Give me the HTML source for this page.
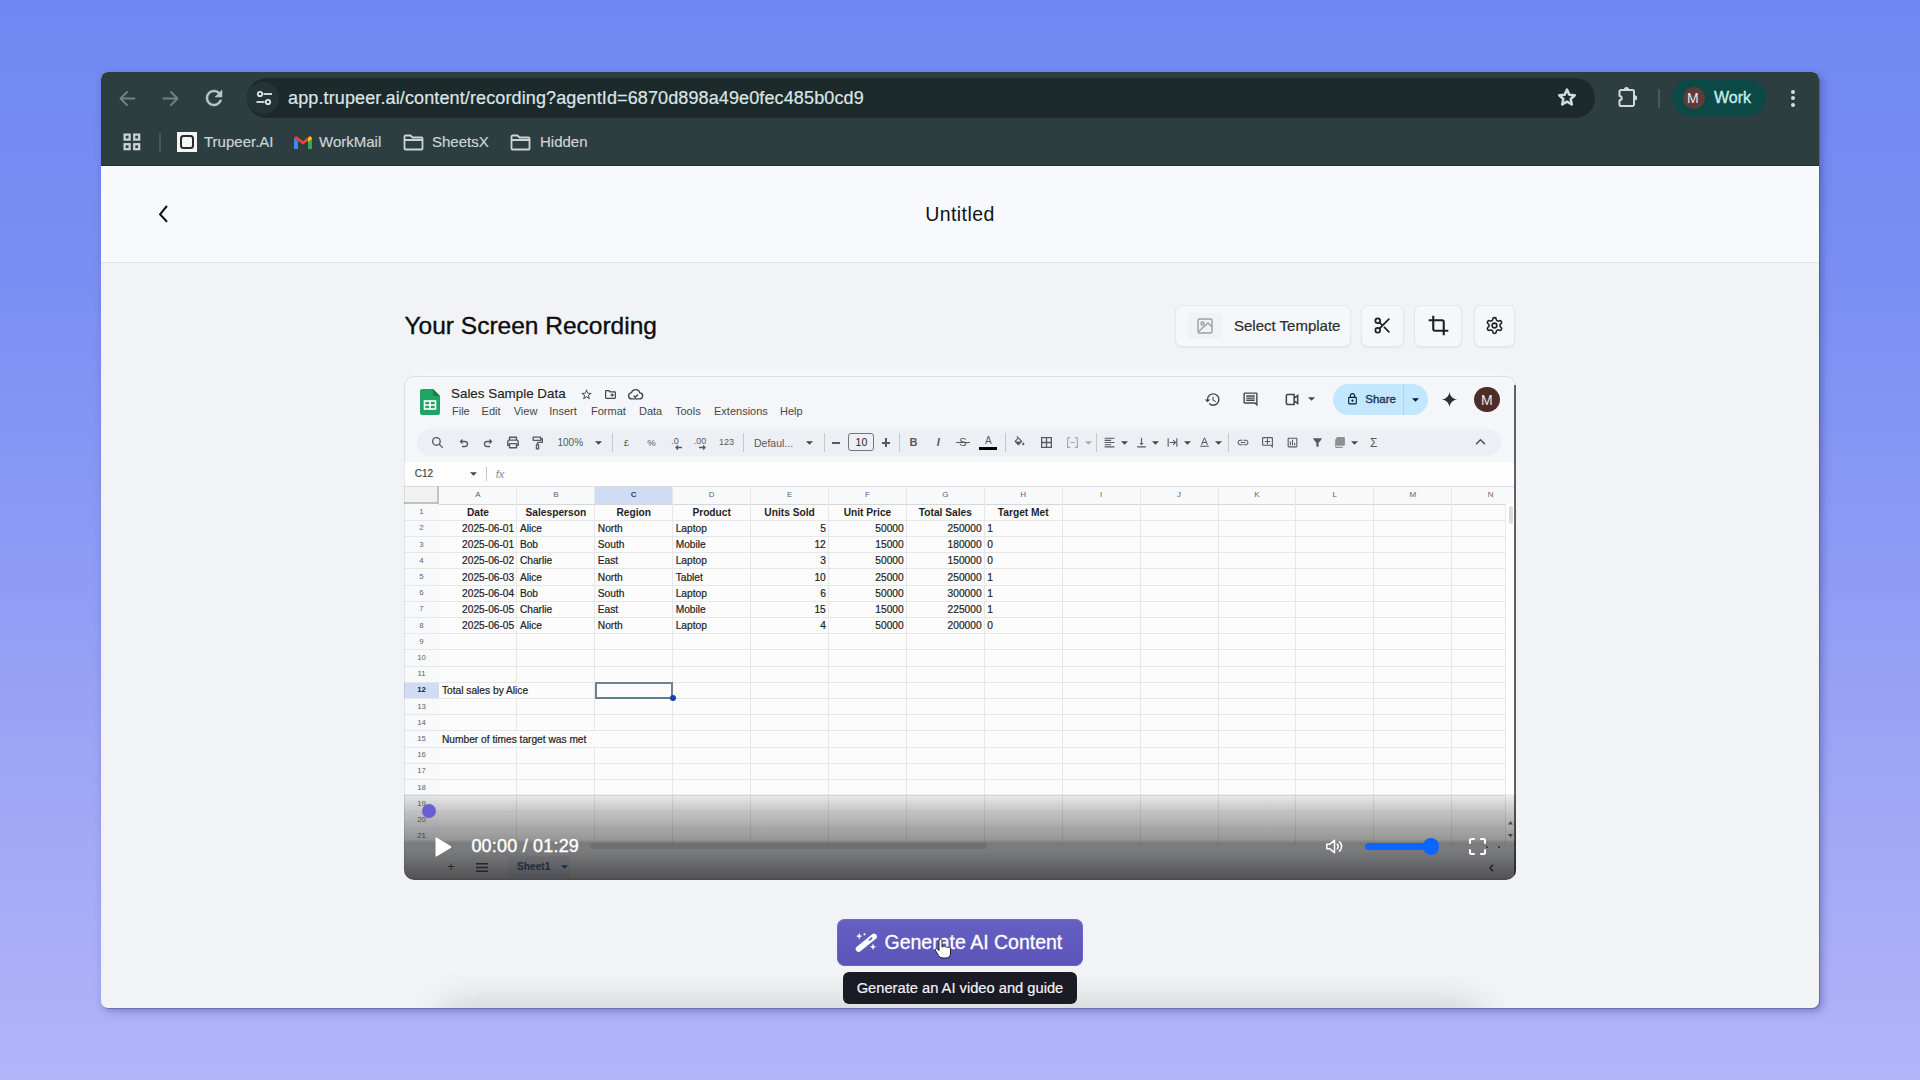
<!DOCTYPE html>
<html><head><meta charset="utf-8">
<style>
*{box-sizing:border-box;margin:0;padding:0}
html,body{width:1920px;height:1080px;overflow:hidden}
body{position:relative;font-family:"Liberation Sans",sans-serif;background:linear-gradient(180deg,#7088f3 0%,#7a8ef3 25%,#8b9af4 50%,#a0a8f6 75%,#b2b4f8 100%)}
.a{position:absolute}
.t{position:absolute;white-space:nowrap;line-height:1}
svg{position:absolute;overflow:visible}
#win{position:absolute;left:101px;top:72px;width:1718px;height:936px;border-radius:7px;overflow:hidden;box-shadow:3px 3px 9px rgba(40,40,120,0.38),1px 1px 0 rgba(60,60,110,0.35);background:#f2f3f6}
#vid{position:absolute;left:404px;top:376px;width:1112px;height:504px;border-radius:10px;overflow:hidden;background:#f5f6f9}
#vid .a,#vid .t,#vid svg{position:absolute}
</style></head>
<body>
<div id="win"><div style="position:absolute;left:345px;top:942px;width:1030px;height:40px;border-radius:20px;box-shadow:0 0 36px 10px rgba(0,0,0,0.16)"></div></div>
<!-- chrome -->
<div class="a" style="left:101px;top:72px;width:1718px;height:94px;background:#2d3e40;border-radius:7px 7px 0 0"></div>
<div class="a" style="left:247px;top:78px;width:1348px;height:40px;border-radius:20px;background:#1c2a2c"></div>
<div class="a" style="left:247px;top:82px;width:32px;height:32px;border-radius:16px;background:#243336"></div>
<!-- back / fwd / reload -->
<svg style="left:118px;top:89px" width="19" height="19" viewBox="0 0 19 19"><path fill="none" stroke="#6f8284" stroke-width="1.9" stroke-linecap="round" stroke-linejoin="round" d="M16.5 9.5H3M9 3L2.5 9.5 9 16"/></svg>
<svg style="left:161px;top:89px" width="19" height="19" viewBox="0 0 19 19"><path fill="none" stroke="#6f8284" stroke-width="1.9" stroke-linecap="round" stroke-linejoin="round" d="M2.5 9.5H16M10 3l6.5 6.5L10 16"/></svg>
<svg style="left:201.6px;top:86px" width="24" height="24" viewBox="0 0 24 24"><path fill="#bac6c7" stroke="#bac6c7" stroke-width="0.5" d="M17.65 6.35C16.2 4.9 14.21 4 12 4c-4.42 0-7.99 3.58-7.99 8s3.57 8 7.99 8c3.73 0 6.84-2.55 7.73-6h-2.08c-.82 2.33-3.04 4-5.65 4-3.31 0-6-2.69-6-6s2.69-6 6-6c1.66 0 3.14.69 4.22 1.78L13 11h7V4l-2.35 2.35z"/></svg>
<!-- tune -->
<svg style="left:255px;top:90px" width="18" height="16" viewBox="0 0 18 16"><g fill="none" stroke="#dfe6e6" stroke-width="1.8"><circle cx="5" cy="4" r="2.2"/><line x1="8.5" y1="4" x2="17" y2="4"/><circle cx="13" cy="12" r="2.2"/><line x1="1.5" y1="12" x2="9.5" y2="12"/></g></svg>
<div class="t" style="left:288px;top:89px;font-size:18px;color:#dde5e6;letter-spacing:0.12px;-webkit-text-stroke:0.2px #dde5e6">app.trupeer.ai/content/recording?agentId=6870d898a49e0fec485b0cd9</div>
<!-- star -->
<svg style="left:1557px;top:87px" width="20" height="20" viewBox="0 0 20 20"><polygon fill="none" stroke="#d0dada" stroke-width="2.5" stroke-linejoin="round" points="10.00,2.60 12.29,7.64 17.80,8.27 13.71,12.01 14.82,17.43 10.00,14.70 5.18,17.43 6.29,12.01 2.20,8.27 7.71,7.64"/></svg>
<!-- puzzle -->
<svg style="left:1615px;top:85px" width="26" height="24" viewBox="1615 85 26 24"><path fill="none" stroke="#d0dada" stroke-width="2" stroke-linejoin="round" d="M1621 90h11.5a1.5 1.5 0 0 1 1.5 1.5v13a1.5 1.5 0 0 1-1.5 1.5H1621a1.5 1.5 0 0 1-1.5-1.5v-4.2a2.2 2.2 0 0 0 0-4.4v-4.4a1.5 1.5 0 0 1 1.5-1.5z"/><path fill="#d0dada" d="M1623.9 89.6a2.6 2.6 0 0 1 5.2 0z M1634.6 95.2a2.6 2.6 0 0 1 0 5.2z"/></svg>
<div class="a" style="left:1658px;top:89px;width:1.5px;height:19px;background:#4a5a5c"></div>
<div class="a" style="left:1672px;top:79px;width:94px;height:37px;border-radius:18.5px;background:#0c4946"></div>
<div class="a" style="left:1683px;top:87px;width:22px;height:22px;border-radius:11px;background:#5d3b38"></div>
<div class="t" style="left:1687px;top:91px;font-size:14px;color:#f0e6e4">M</div>
<div class="t" style="left:1714px;top:90px;font-size:16px;color:#c4f1ee;-webkit-text-stroke:0.3px #c4f1ee">Work</div>
<div class="a" style="left:1790.5px;top:89.5px;width:4px;height:4px;border-radius:2px;background:#d5dede"></div>
<div class="a" style="left:1790.5px;top:96px;width:4px;height:4px;border-radius:2px;background:#d5dede"></div>
<div class="a" style="left:1790.5px;top:102.5px;width:4px;height:4px;border-radius:2px;background:#d5dede"></div>
<!-- bookmarks -->
<svg style="left:123px;top:133px" width="18" height="18" viewBox="0 0 18 18"><g fill="none" stroke="#ccd5d6" stroke-width="2.2"><rect x="1.6" y="1.6" width="5" height="5"/><rect x="11.2" y="1.6" width="5" height="5"/><rect x="1.6" y="11.2" width="5" height="5"/><rect x="11.2" y="11.2" width="5" height="5"/></g></svg>
<div class="a" style="left:159px;top:133px;width:1.5px;height:19px;background:#46575a"></div>
<div class="a" style="left:177px;top:132px;width:20px;height:20px;background:#f4f4f4"></div>
<div class="a" style="left:180px;top:135px;width:14px;height:14px;border-radius:3.5px;border:2px solid #2a2a2e"></div>
<div class="t" style="left:204px;top:134px;font-size:15px;color:#ccd4d5;-webkit-text-stroke:0.2px #ccd4d5">Trupeer.AI</div>
<svg style="left:294px;top:136px" width="18" height="13" viewBox="0 0 18 13"><path fill="#4285f4" d="M0 2v11h4V5z"/><path fill="#34a853" d="M14 5v8h4V2z"/><path fill="#ea4335" d="M0 2l9 6.5L18 2 16 0 9 5 2 0z"/><path fill="#fbbc04" d="M16 0l2 2v1l-4 3V2z"/></svg>
<div class="t" style="left:319px;top:134px;font-size:15px;color:#ccd4d5;-webkit-text-stroke:0.2px #ccd4d5">WorkMail</div>
<svg style="left:403px;top:134px" width="21" height="17" viewBox="0 0 21 17"><path fill="none" stroke="#ccd5d6" stroke-width="1.8" stroke-linejoin="round" d="M1.5 2.5a1 1 0 0 1 1-1h5l2 2h9a1 1 0 0 1 1 1v10a1 1 0 0 1-1 1h-16a1 1 0 0 1-1-1z M1.5 6h18"/></svg>
<div class="t" style="left:432px;top:134px;font-size:15px;color:#ccd4d5;-webkit-text-stroke:0.2px #ccd4d5">SheetsX</div>
<svg style="left:510px;top:134px" width="21" height="17" viewBox="0 0 21 17"><path fill="none" stroke="#ccd5d6" stroke-width="1.8" stroke-linejoin="round" d="M1.5 2.5a1 1 0 0 1 1-1h5l2 2h9a1 1 0 0 1 1 1v10a1 1 0 0 1-1 1h-16a1 1 0 0 1-1-1z M1.5 6h18"/></svg>
<div class="t" style="left:540px;top:134px;font-size:15px;color:#ccd4d5;-webkit-text-stroke:0.2px #ccd4d5">Hidden</div>

<div class="a" style="left:101px;top:166px;width:1718px;height:97px;background:#f8f9fc;border-bottom:1px solid #e2e4e9"></div>
<div class="a" style="left:101px;top:165px;width:1718px;height:1px;background:#1f2b2c;"></div>
<svg style="left:150px;top:200px" width="20" height="28" viewBox="0 0 20 28"><path fill="none" stroke="#0f1115" stroke-width="2" stroke-linecap="round" stroke-linejoin="round" d="M16.5 6.5L10 14.3l6.5 7"/></svg>
<div class="t" style="top:205.28px;font-size:19.5px;color:#111318;left:810px;width:300px;text-align:center;letter-spacing:0.4px">Untitled</div>
<div class="t" style="top:313.54px;font-size:24.5px;color:#0d0d0f;left:404.5px;-webkit-text-stroke:0.35px #0d0d0f">Your Screen Recording</div>
<div class="a" style="left:1175px;top:305px;width:176px;height:42px;background:#f6f7f9;border:1px solid #e4e6ea;border-radius:7px;box-shadow:0 1px 2px rgba(0,0,0,0.06)"></div>
<div class="a" style="left:1361px;top:305px;width:43px;height:42px;background:#f6f7f9;border:1px solid #e4e6ea;border-radius:7px;box-shadow:0 1px 2px rgba(0,0,0,0.06)"></div>
<div class="a" style="left:1414px;top:305px;width:48px;height:42px;background:#f6f7f9;border:1px solid #e4e6ea;border-radius:7px;box-shadow:0 1px 2px rgba(0,0,0,0.06)"></div>
<div class="a" style="left:1474px;top:305px;width:41px;height:42px;background:#f6f7f9;border:1px solid #e4e6ea;border-radius:7px;box-shadow:0 1px 2px rgba(0,0,0,0.06)"></div>
<div class="a" style="left:1188px;top:313px;width:34px;height:26px;background:#f1f2f4;border-radius:4px"></div>
<svg style="left:1196px;top:317px" width="18" height="18" viewBox="0 0 18 18"><g fill="none" stroke="#9aa0a6" stroke-width="1.4"><rect x="2" y="2" width="14" height="14" rx="1.5"/><circle cx="6.5" cy="6.5" r="1.5"/><path d="M2.5 14.5L12 6l4 4"/></g></svg>
<div class="t" style="top:318.18px;font-size:15px;color:#2b2d31;left:1234px;-webkit-text-stroke:0.2px #2b2d31">Select Template</div>
<svg style="left:1373px;top:316px" width="19" height="19" viewBox="0 0 24 24"><g fill="none" stroke="#1f2023" stroke-width="2.2" stroke-linecap="round"><circle cx="6" cy="6" r="3"/><circle cx="6" cy="18" r="3"/><path d="M20 4L8.12 15.88M14.47 14.48L20 20M8.12 8.12L12 12"/></g></svg>
<svg style="left:1428px;top:315px" width="21" height="21" viewBox="0 0 24 24"><g fill="none" stroke="#1f2023" stroke-width="2.4" stroke-linecap="square"><path d="M6 2v14a2 2 0 0 0 2 2h14"/><path d="M18 22V8a2 2 0 0 0-2-2H2"/></g></svg>
<svg style="left:1485px;top:316px" width="19" height="19" viewBox="0 0 24 24"><g fill="none" stroke="#1f2023" stroke-width="2"><path d="M12.22 2h-.44a2 2 0 0 0-2 2v.18a2 2 0 0 1-1 1.73l-.43.25a2 2 0 0 1-2 0l-.15-.08a2 2 0 0 0-2.73.73l-.22.38a2 2 0 0 0 .73 2.73l.15.1a2 2 0 0 1 1 1.72v.51a2 2 0 0 1-1 1.74l-.15.09a2 2 0 0 0-.73 2.73l.22.38a2 2 0 0 0 2.73.73l.15-.08a2 2 0 0 1 2 0l.43.25a2 2 0 0 1 1 1.73V20a2 2 0 0 0 2 2h.44a2 2 0 0 0 2-2v-.18a2 2 0 0 1 1-1.73l.43-.25a2 2 0 0 1 2 0l.15.08a2 2 0 0 0 2.73-.73l.22-.39a2 2 0 0 0-.73-2.73l-.15-.08a2 2 0 0 1-1-1.74v-.5a2 2 0 0 1 1-1.74l.15-.09a2 2 0 0 0 .73-2.73l-.22-.38a2 2 0 0 0-2.73-.73l-.15.08a2 2 0 0 1-2 0l-.43-.25a2 2 0 0 1-1-1.73V4a2 2 0 0 0-2-2z"/><circle cx="12" cy="12" r="3"/></g></svg>
<div class="a" style="left:404px;top:364px;width:1112px;height:12px;background:linear-gradient(180deg,rgba(255,255,255,0),rgba(255,255,255,0.55));-webkit-mask-image:linear-gradient(90deg,transparent,#000 4%,#000 96%,transparent)"></div>
<div id="vid">
<div class="a" style="left:0px;top:110px;width:1112px;height:400px;background:#fcfcfc;"></div>
<svg style="left:16px;top:13px" width="20" height="26" viewBox="0 0 20 26"><path fill="#1fa463" d="M0 2a2 2 0 0 1 2-2h11l7 7v17a2 2 0 0 1-2 2H2a2 2 0 0 1-2-2z"/><path fill="#188038" d="M13 0l7 7h-5a2 2 0 0 1-2-2z"/><g fill="none" stroke="#fff" stroke-width="1.6"><rect x="4.5" y="12" width="11" height="8"/><path d="M4.5 16h11M10 12v8"/></g></svg>
<div class="t" style="top:11.46px;font-size:13.4px;color:#1f1f1f;left:47px;-webkit-text-stroke:0.15px #1f1f1f">Sales Sample Data</div>
<svg style="left:176px;top:12px" width="13" height="13" viewBox="0 0 24 24"><path fill="#444746" d="M22 9.24l-7.19-.62L12 2 9.19 8.63 2 9.24l5.46 4.73L5.82 21 12 17.27 18.18 21l-1.63-7.03L22 9.24zM12 15.4l-3.76 2.27 1-4.28-3.32-2.88 4.38-.38L12 6.1l1.71 4.04 4.38.38-3.32 2.88 1 4.28L12 15.4z"/></svg>
<svg style="left:200px;top:12px" width="13" height="13" viewBox="0 0 24 24"><path fill="none" stroke="#444746" stroke-width="2.2" d="M3 6a1 1 0 0 1 1-1h5l2 2h9a1 1 0 0 1 1 1v10a1 1 0 0 1-1 1H4a1 1 0 0 1-1-1z M12 13h5M14.5 10.5l2.5 2.5-2.5 2.5"/></svg>
<svg style="left:224px;top:12px" width="15" height="13" viewBox="0 0 24 20"><path fill="none" stroke="#444746" stroke-width="2.2" d="M6 17a5 5 0 0 1-.5-9.97A7 7 0 0 1 19 7.5 4.75 4.75 0 0 1 18.5 17z M9 12l2.5 2.5L16 10"/></svg>
<div class="t" style="top:30.33px;font-size:11px;color:#444746;left:48px;">File</div>
<div class="t" style="top:30.33px;font-size:11px;color:#444746;left:77.6px;">Edit</div>
<div class="t" style="top:30.33px;font-size:11px;color:#444746;left:109.7px;">View</div>
<div class="t" style="top:30.33px;font-size:11px;color:#444746;left:145.3px;">Insert</div>
<div class="t" style="top:30.33px;font-size:11px;color:#444746;left:187px;">Format</div>
<div class="t" style="top:30.33px;font-size:11px;color:#444746;left:235px;">Data</div>
<div class="t" style="top:30.33px;font-size:11px;color:#444746;left:271px;">Tools</div>
<div class="t" style="top:30.33px;font-size:11px;color:#444746;left:310px;">Extensions</div>
<div class="t" style="top:30.33px;font-size:11px;color:#444746;left:376px;">Help</div>
<svg style="left:800px;top:15px" width="17" height="17" viewBox="0 0 24 24"><path fill="#444746" d="M13 3a9 9 0 0 0-9 9H1l3.89 3.89.07.14L9 12H6c0-3.87 3.13-7 7-7s7 3.13 7 7-3.13 7-7 7c-1.93 0-3.68-.79-4.94-2.06l-1.42 1.42A8.954 8.954 0 0 0 13 21a9 9 0 0 0 0-18zm-1 5v5l4.28 2.54.72-1.21-3.5-2.08V8H12z"/></svg>
<svg style="left:838px;top:15px" width="17" height="17" viewBox="0 0 24 24"><path fill="#444746" d="M21.99 4c0-1.1-.89-2-1.99-2H4c-1.1 0-2 .9-2 2v12c0 1.1.9 2 2 2h14l4 4-.01-18zM20 4v13.17L18.83 16H4V4h16zM6 12h12v2H6zm0-3h12v2H6zm0-3h12v2H6z"/></svg>
<svg style="left:879px;top:15px" width="18" height="17" viewBox="0 0 24 24"><path fill="none" stroke="#444746" stroke-width="2.2" d="M4 7a2 2 0 0 1 2-2h9v14H6a2 2 0 0 1-2-2z M15 10l5-3.5v11L15 14"/></svg>
<svg style="left:904px;top:21px" width="7" height="4" viewBox="0 0 10 5"><path fill="#444746" d="M0 0h10L5 5z"/></svg>
<div class="a" style="left:928.7px;top:8px;width:95.3px;height:31px;background:#c2e7ff;border-radius:15.5px"></div>
<div class="a" style="left:999px;top:8px;width:1px;height:31px;background:#a9d4ef;"></div>
<svg style="left:942px;top:15px" width="13" height="16" viewBox="0 0 24 24"><path fill="#001d35" d="M18 8h-1V6c0-2.76-2.24-5-5-5S7 3.24 7 6v2H6c-1.1 0-2 .9-2 2v10c0 1.1.9 2 2 2h12c1.1 0 2-.9 2-2V10c0-1.1-.9-2-2-2zM9 6c0-1.66 1.34-3 3-3s3 1.34 3 3v2H9V6zm9 14H6V10h12v10zm-6-3c1.1 0 2-.9 2-2s-.9-2-2-2-2 .9-2 2 .9 2 2 2z"/></svg>
<div class="t" style="top:17.89px;font-size:11.5px;color:#1b3550;left:961.3px;-webkit-text-stroke:0.35px #1b3550">Share</div>
<svg style="left:1007.5px;top:21.5px" width="7" height="4" viewBox="0 0 10 5"><path fill="#001d35" d="M0 0h10L5 5z"/></svg>
<svg style="left:1037px;top:15px" width="17" height="17" viewBox="0 0 24 24"><path fill="#2d3133" d="M12 1c.6 6 4.8 10.2 11 11-6.2.8-10.4 5-11 11-.6-6-4.8-10.2-11-11 6.2-.8 10.4-5 11-11z"/></svg>
<div class="a" style="left:1070px;top:10.7px;width:25.8px;height:25.8px;background:#4e2c2a;border-radius:50%"></div>
<div class="t" style="top:16.97px;font-size:14px;color:#f2e6e4;left:932.9px;width:300px;text-align:center;">M</div>
<div class="a" style="left:13px;top:53px;width:1083.5px;height:27px;background:#eceff4;border-radius:13.5px"></div>
<svg style="left:26.5px;top:60px" width="13" height="13" viewBox="0 0 24 24"><path fill="none" stroke="#555a5e" stroke-width="2.6" stroke-linecap="round" d="M10 3a7 7 0 1 1 0 14 7 7 0 0 1 0-14zM15 15l6 6"/></svg>
<svg style="left:53.5px;top:61px" width="12" height="12" viewBox="0 0 24 24"><path fill="none" stroke="#555a5e" stroke-width="2.6" d="M9 5L5 9l4 4M5 9h9a5 5 0 0 1 0 10H8"/></svg>
<svg style="left:78px;top:61px" width="12" height="12" viewBox="0 0 24 24"><path fill="none" stroke="#555a5e" stroke-width="2.6" d="M15 5l4 4-4 4M19 9h-9a5 5 0 0 0 0 10h6"/></svg>
<svg style="left:102px;top:60px" width="14" height="13" viewBox="0 0 24 22"><path fill="none" stroke="#555a5e" stroke-width="2.4" stroke-linejoin="round" d="M6 7V2h12v5M6 16H3V10a3 3 0 0 1 3-3h12a3 3 0 0 1 3 3v6h-3M6 13h12v7H6z"/></svg>
<svg style="left:126.5px;top:59.5px" width="13" height="14" viewBox="0 0 24 26"><path fill="none" stroke="#555a5e" stroke-width="2.4" stroke-linejoin="round" d="M4 2h14v6H4z M18 5h3v7h-9v4 M10 16h4v8h-4z"/></svg>
<div class="t" style="top:61.92px;font-size:10px;color:#555a5e;left:153.5px;">100%</div>
<svg style="left:191.1px;top:64.5px" width="7" height="4" viewBox="0 0 10 5"><path fill="#444746" d="M0 0h10L5 5z"/></svg>
<div class="a" style="left:207.9px;top:57px;width:1px;height:19px;background:#c7c7c7;"></div>
<div class="t" style="top:61.86px;font-size:9.5px;color:#555a5e;left:72.4px;width:300px;text-align:center;">£</div>
<div class="t" style="top:61.86px;font-size:9.5px;color:#555a5e;left:97.4px;width:300px;text-align:center;">%</div>
<div class="t" style="top:61.11px;font-size:9px;color:#555a5e;left:121px;width:300px;text-align:center;">.0</div>
<svg style="left:270px;top:69px" width="8" height="5" viewBox="0 0 8 5"><path fill="none" stroke="#555a5e" stroke-width="1.3" d="M8 2.5H2M4 0.5L2 2.5l2 2"/></svg>
<div class="t" style="top:61.11px;font-size:9px;color:#555a5e;left:146px;width:300px;text-align:center;">.00</div>
<svg style="left:295px;top:69px" width="8" height="5" viewBox="0 0 8 5"><path fill="none" stroke="#555a5e" stroke-width="1.3" d="M0 2.5h6M4 0.5l2 2-2 2"/></svg>
<div class="t" style="top:62.11px;font-size:9px;color:#555a5e;left:172.4px;width:300px;text-align:center;">123</div>
<div class="a" style="left:338.6px;top:57px;width:1px;height:19px;background:#c7c7c7;"></div>
<div class="t" style="top:61.68px;font-size:10.5px;color:#555a5e;left:350px;">Defaul...</div>
<svg style="left:401.5px;top:64.5px" width="7" height="4" viewBox="0 0 10 5"><path fill="#444746" d="M0 0h10L5 5z"/></svg>
<div class="a" style="left:420.4px;top:57px;width:1px;height:19px;background:#c7c7c7;"></div>
<div class="a" style="left:428px;top:66px;width:8px;height:1.5px;background:#555a5e;"></div>
<div class="a" style="left:444.4px;top:57px;width:26px;height:18px;background:transparent;border:1px solid #747775;border-radius:3px"></div>
<div class="t" style="top:61.38px;font-size:10.5px;color:#1f1f1f;left:307.4px;width:300px;text-align:center;">10</div>
<div class="a" style="left:477.5px;top:66px;width:8px;height:1.5px;background:#555a5e;"></div>
<div class="a" style="left:481px;top:62px;width:1.5px;height:8.5px;background:#555a5e;"></div>
<div class="a" style="left:495px;top:57px;width:1px;height:19px;background:#c7c7c7;"></div>
<div class="t" style="top:61.43px;font-size:11px;color:#555a5e;font-weight:bold;left:359.4px;width:300px;text-align:center;">B</div>
<div class="t" style="top:61.43px;font-size:11px;color:#555a5e;font-weight:bold;left:384.4px;width:300px;text-align:center;font-style:italic;font-family:"Liberation Serif",serif">I</div>
<div class="t" style="top:61.43px;font-size:11px;color:#555a5e;left:409px;width:300px;text-align:center;">S</div>
<div class="a" style="left:552px;top:66px;width:14px;height:1.2px;background:#555a5e;"></div>
<div class="t" style="top:60.12px;font-size:10px;color:#555a5e;left:434.4px;width:300px;text-align:center;">A</div>
<div class="a" style="left:575px;top:71px;width:18px;height:3px;background:#000000;"></div>
<div class="a" style="left:600.8px;top:57px;width:1px;height:19px;background:#c7c7c7;"></div>
<svg style="left:609px;top:60px" width="13" height="13" viewBox="0 0 24 24"><path fill="#555a5e" d="M16.56 8.94L7.62 0 6.21 1.41l2.38 2.38-5.15 5.15a1.49 1.49 0 0 0 0 2.12l5.5 5.5c.29.29.68.44 1.06.44s.77-.15 1.06-.44l5.5-5.5c.59-.58.59-1.53 0-2.12zM5.21 10L10 5.21 14.79 10H5.21zM19 11.5s-2 2.17-2 3.5c0 1.1.9 2 2 2s2-.9 2-2c0-1.33-2-3.5-2-3.5z"/></svg>
<svg style="left:636px;top:60px" width="13" height="13" viewBox="0 0 24 24"><path fill="none" stroke="#555a5e" stroke-width="2.4" d="M3 3h18v18H3z M12 3v18M3 12h18"/></svg>
<svg style="left:662px;top:60px" width="13" height="13" viewBox="0 0 24 24"><path fill="none" stroke="#a8abad" stroke-width="2.2" d="M3 3h5M3 3v18h5M21 3h-5M21 3v18h-5M8 12h8"/></svg>
<svg style="left:680.5px;top:64.5px" width="7" height="4" viewBox="0 0 10 5"><path fill="#a8abad" d="M0 0h10L5 5z"/></svg>
<div class="a" style="left:692px;top:57px;width:1px;height:19px;background:#c7c7c7;"></div>
<svg style="left:699px;top:60px" width="13" height="13" viewBox="0 0 24 24"><path fill="#555a5e" d="M3 3h18v2H3zM3 7h12v2H3zM3 11h18v2H3zM3 15h12v2H3zM3 19h18v2H3z"/></svg>
<svg style="left:716.5px;top:64.5px" width="7" height="4" viewBox="0 0 10 5"><path fill="#444746" d="M0 0h10L5 5z"/></svg>
<svg style="left:731px;top:60px" width="13" height="13" viewBox="0 0 24 24"><path fill="#555a5e" d="M16 13h-3V3h-2v10H8l4 4 4-4zM4 19v2h16v-2H4z"/></svg>
<svg style="left:747.5px;top:64.5px" width="7" height="4" viewBox="0 0 10 5"><path fill="#444746" d="M0 0h10L5 5z"/></svg>
<svg style="left:762px;top:60px" width="13" height="13" viewBox="0 0 24 24"><path fill="#555a5e" d="M3 4h2v16H3zM19 4h2v16h-2zM7 11h8.2l-2.6-2.6L14 7l5 5-5 5-1.4-1.4 2.6-2.6H7z"/></svg>
<svg style="left:779.5px;top:64.5px" width="7" height="4" viewBox="0 0 10 5"><path fill="#444746" d="M0 0h10L5 5z"/></svg>
<svg style="left:794px;top:60px" width="13" height="13" viewBox="0 0 24 24"><path fill="#555a5e" d="M4 20h16v-2l-2-0.01V18H4zM11 3L5.5 16h2.2l1.1-3h6.4l1.1 3h2.2L13 3h-2zm-1.4 8L12 4.9 14.4 11H9.6z"/></svg>
<svg style="left:811.1px;top:64.5px" width="7" height="4" viewBox="0 0 10 5"><path fill="#444746" d="M0 0h10L5 5z"/></svg>
<div class="a" style="left:823.8px;top:57px;width:1px;height:19px;background:#c7c7c7;"></div>
<svg style="left:832px;top:60px" width="14" height="13" viewBox="0 0 24 24"><path fill="#555a5e" d="M3.9 12c0-1.71 1.39-3.1 3.1-3.1h4V7H7c-2.76 0-5 2.24-5 5s2.24 5 5 5h4v-1.9H7c-1.71 0-3.1-1.39-3.1-3.1zM8 13h8v-2H8v2zm9-6h-4v1.9h4c1.71 0 3.1 1.39 3.1 3.1s-1.39 3.1-3.1 3.1h-4V17h4c2.76 0 5-2.24 5-5s-2.24-5-5-5z"/></svg>
<svg style="left:857px;top:60px" width="13" height="13" viewBox="0 0 24 24"><path fill="#555a5e" d="M22 4c0-1.1-.9-2-2-2H4c-1.1 0-2 .9-2 2v12c0 1.1.9 2 2 2h14l4 4V4zm-2 13.17L18.83 16H4V4h16v13.17zM13 5h-2v4H7v2h4v4h2v-4h4V9h-4z"/></svg>
<svg style="left:881.5px;top:60px" width="13" height="13" viewBox="0 0 24 24"><path fill="#555a5e" d="M19 3H5c-1.1 0-2 .9-2 2v14c0 1.1.9 2 2 2h14c1.1 0 2-.9 2-2V5c0-1.1-.9-2-2-2zm0 16H5V5h14v14zM7 10h2v7H7zm4-3h2v10h-2zm4 6h2v4h-2z"/></svg>
<svg style="left:907px;top:60px" width="13" height="13" viewBox="0 0 24 24"><path fill="#555a5e" d="M4.25 5.61C6.27 8.2 10 13 10 13v6c0 .55.45 1 1 1h2c.55 0 1-.45 1-1v-6s3.72-4.8 5.74-7.39A.998.998 0 0 0 18.95 4H5.04c-.83 0-1.3.95-.79 1.61z"/></svg>
<svg style="left:929px;top:60px" width="13" height="13" viewBox="0 0 24 24"><path fill="#8d9092" d="M4 6h2v14h12v2H6a2 2 0 0 1-2-2zM8 2h12a2 2 0 0 1 2 2v12a2 2 0 0 1-2 2H8a2 2 0 0 1-2-2V4a2 2 0 0 1 2-2z"/></svg>
<svg style="left:947.2px;top:64.5px" width="7" height="4" viewBox="0 0 10 5"><path fill="#444746" d="M0 0h10L5 5z"/></svg>
<div class="t" style="top:60.94px;font-size:12px;color:#555a5e;left:819.7px;width:300px;text-align:center;">&Sigma;</div>
<svg style="left:1071px;top:62px" width="11" height="7" viewBox="0 0 12 8"><path fill="none" stroke="#555a5e" stroke-width="1.8" d="M1 7l5-5 5 5"/></svg>
<div class="a" style="left:0px;top:86px;width:1112px;height:24px;background:#fdfdfe;"></div>
<div class="t" style="top:93.12px;font-size:10px;color:#3c4043;left:10.8px;-webkit-text-stroke:0.15px #3c4043">C12</div>
<svg style="left:65.8px;top:96px" width="7" height="4" viewBox="0 0 10 5"><path fill="#444746" d="M0 0h10L5 5z"/></svg>
<div class="a" style="left:82px;top:91px;width:1px;height:14px;background:#c7c7c7;"></div>
<div class="t" style="top:93.13px;font-size:11px;color:#8a8d8f;left:-54px;width:300px;text-align:center;font-style:italic;font-family:"Liberation Serif",serif">fx</div>
<div class="a" style="left:35px;top:110px;width:1075px;height:18px;background:#f8f9fa;"></div>
<div class="a" style="left:0px;top:110px;width:35px;height:18px;background:#f0f1f1;"></div>
<div class="a" style="left:190.8px;top:110px;width:77.9px;height:18px;background:#d0dcf4;"></div>
<div class="a" style="left:0px;top:128px;width:35px;height:400px;background:#f8f9fa;"></div>
<div class="a" style="left:0px;top:306.2px;width:35px;height:16.2px;background:#d0dcf4;"></div>
<div class="a" style="left:0px;top:110px;width:1110px;height:1px;background:#dadcdf;"></div>
<div class="a" style="left:0px;top:143.7px;width:1101px;height:1px;background:#e6e7e8;"></div>
<div class="a" style="left:0px;top:159.9px;width:1101px;height:1px;background:#e6e7e8;"></div>
<div class="a" style="left:0px;top:176.1px;width:1101px;height:1px;background:#e6e7e8;"></div>
<div class="a" style="left:0px;top:192.3px;width:1101px;height:1px;background:#e6e7e8;"></div>
<div class="a" style="left:0px;top:208.5px;width:1101px;height:1px;background:#e6e7e8;"></div>
<div class="a" style="left:0px;top:224.7px;width:1101px;height:1px;background:#e6e7e8;"></div>
<div class="a" style="left:0px;top:240.9px;width:1101px;height:1px;background:#e6e7e8;"></div>
<div class="a" style="left:0px;top:257.1px;width:1101px;height:1px;background:#e6e7e8;"></div>
<div class="a" style="left:0px;top:273.3px;width:1101px;height:1px;background:#e6e7e8;"></div>
<div class="a" style="left:0px;top:289.5px;width:1101px;height:1px;background:#e6e7e8;"></div>
<div class="a" style="left:0px;top:305.7px;width:1101px;height:1px;background:#e6e7e8;"></div>
<div class="a" style="left:0px;top:321.9px;width:1101px;height:1px;background:#e6e7e8;"></div>
<div class="a" style="left:0px;top:338.1px;width:1101px;height:1px;background:#e6e7e8;"></div>
<div class="a" style="left:0px;top:354.3px;width:1101px;height:1px;background:#e6e7e8;"></div>
<div class="a" style="left:0px;top:370.5px;width:1101px;height:1px;background:#e6e7e8;"></div>
<div class="a" style="left:0px;top:386.7px;width:1101px;height:1px;background:#e6e7e8;"></div>
<div class="a" style="left:0px;top:402.9px;width:1101px;height:1px;background:#e6e7e8;"></div>
<div class="a" style="left:0px;top:419.1px;width:1101px;height:1px;background:#e6e7e8;"></div>
<div class="a" style="left:0px;top:435.3px;width:1101px;height:1px;background:#f0f0f0;"></div>
<div class="a" style="left:0px;top:451.5px;width:1101px;height:1px;background:#f0f0f0;"></div>
<div class="a" style="left:0px;top:467.7px;width:1101px;height:1px;background:#f0f0f0;"></div>
<div class="a" style="left:0px;top:125.5px;width:35px;height:2.8px;background:#c0c2c4;"></div>
<div class="a" style="left:32.5px;top:110px;width:2.8px;height:18px;background:#c0c2c4;"></div>
<div class="a" style="left:35px;top:127.5px;width:1066px;height:1px;background:#d5d7da;"></div>
<div class="a" style="left:112.4px;top:110px;width:1px;height:400px;background:#e6e7e8;"></div>
<div class="a" style="left:190.3px;top:110px;width:1px;height:400px;background:#e6e7e8;"></div>
<div class="a" style="left:268.2px;top:110px;width:1px;height:400px;background:#e6e7e8;"></div>
<div class="a" style="left:346.1px;top:110px;width:1px;height:400px;background:#e6e7e8;"></div>
<div class="a" style="left:424px;top:110px;width:1px;height:400px;background:#e6e7e8;"></div>
<div class="a" style="left:501.9px;top:110px;width:1px;height:400px;background:#e6e7e8;"></div>
<div class="a" style="left:579.8px;top:110px;width:1px;height:400px;background:#e6e7e8;"></div>
<div class="a" style="left:657.7px;top:110px;width:1px;height:400px;background:#e6e7e8;"></div>
<div class="a" style="left:735.6px;top:110px;width:1px;height:400px;background:#e6e7e8;"></div>
<div class="a" style="left:813.5px;top:110px;width:1px;height:400px;background:#e6e7e8;"></div>
<div class="a" style="left:891.4px;top:110px;width:1px;height:400px;background:#e6e7e8;"></div>
<div class="a" style="left:969.3px;top:110px;width:1px;height:400px;background:#e6e7e8;"></div>
<div class="a" style="left:1047.2px;top:110px;width:1px;height:400px;background:#e6e7e8;"></div>
<div class="a" style="left:1125.1px;top:110px;width:1px;height:400px;background:#e6e7e8;"></div>
<div class="a" style="left:1101px;top:128px;width:9px;height:400px;background:#ffffff;border-left:1px solid #e8e8e8"></div>
<div class="a" style="left:1104.5px;top:130px;width:4.5px;height:18px;background:#dadcdf;border-radius:2px"></div>
<div class="a" style="left:1110.3px;top:9px;width:1.4px;height:520px;background:#666666;"></div>
<div class="t" style="top:114.9px;font-size:8px;color:#5f6368;left:-76.05px;width:300px;text-align:center;">A</div>
<div class="t" style="top:114.9px;font-size:8px;color:#5f6368;left:1.85px;width:300px;text-align:center;">B</div>
<div class="t" style="top:114.9px;font-size:8px;color:#1e3f7a;font-weight:bold;left:79.75px;width:300px;text-align:center;">C</div>
<div class="t" style="top:114.9px;font-size:8px;color:#5f6368;left:157.65px;width:300px;text-align:center;">D</div>
<div class="t" style="top:114.9px;font-size:8px;color:#5f6368;left:235.55px;width:300px;text-align:center;">E</div>
<div class="t" style="top:114.9px;font-size:8px;color:#5f6368;left:313.45px;width:300px;text-align:center;">F</div>
<div class="t" style="top:114.9px;font-size:8px;color:#5f6368;left:391.35px;width:300px;text-align:center;">G</div>
<div class="t" style="top:114.9px;font-size:8px;color:#5f6368;left:469.25px;width:300px;text-align:center;">H</div>
<div class="t" style="top:114.9px;font-size:8px;color:#5f6368;left:547.15px;width:300px;text-align:center;">I</div>
<div class="t" style="top:114.9px;font-size:8px;color:#5f6368;left:625.05px;width:300px;text-align:center;">J</div>
<div class="t" style="top:114.9px;font-size:8px;color:#5f6368;left:702.95px;width:300px;text-align:center;">K</div>
<div class="t" style="top:114.9px;font-size:8px;color:#5f6368;left:780.85px;width:300px;text-align:center;">L</div>
<div class="t" style="top:114.9px;font-size:8px;color:#5f6368;left:858.75px;width:300px;text-align:center;">M</div>
<div class="t" style="top:114.9px;font-size:8px;color:#5f6368;left:936.65px;width:300px;text-align:center;">N</div>
<div class="t" style="top:132.29px;font-size:7.8px;color:#5f6368;left:-132.5px;width:300px;text-align:center;">1</div>
<div class="t" style="top:148.49px;font-size:7.8px;color:#5f6368;left:-132.5px;width:300px;text-align:center;">2</div>
<div class="t" style="top:164.69px;font-size:7.8px;color:#5f6368;left:-132.5px;width:300px;text-align:center;">3</div>
<div class="t" style="top:180.89px;font-size:7.8px;color:#5f6368;left:-132.5px;width:300px;text-align:center;">4</div>
<div class="t" style="top:197.09px;font-size:7.8px;color:#5f6368;left:-132.5px;width:300px;text-align:center;">5</div>
<div class="t" style="top:213.29px;font-size:7.8px;color:#5f6368;left:-132.5px;width:300px;text-align:center;">6</div>
<div class="t" style="top:229.49px;font-size:7.8px;color:#5f6368;left:-132.5px;width:300px;text-align:center;">7</div>
<div class="t" style="top:245.69px;font-size:7.8px;color:#5f6368;left:-132.5px;width:300px;text-align:center;">8</div>
<div class="t" style="top:261.89px;font-size:7.8px;color:#5f6368;left:-132.5px;width:300px;text-align:center;">9</div>
<div class="t" style="top:278.09px;font-size:7.8px;color:#5f6368;left:-132.5px;width:300px;text-align:center;">10</div>
<div class="t" style="top:294.29px;font-size:7.8px;color:#5f6368;left:-132.5px;width:300px;text-align:center;">11</div>
<div class="t" style="top:310.49px;font-size:7.8px;color:#1f1f1f;font-weight:bold;left:-132.5px;width:300px;text-align:center;">12</div>
<div class="t" style="top:326.69px;font-size:7.8px;color:#5f6368;left:-132.5px;width:300px;text-align:center;">13</div>
<div class="t" style="top:342.89px;font-size:7.8px;color:#5f6368;left:-132.5px;width:300px;text-align:center;">14</div>
<div class="t" style="top:359.09px;font-size:7.8px;color:#5f6368;left:-132.5px;width:300px;text-align:center;">15</div>
<div class="t" style="top:375.29px;font-size:7.8px;color:#5f6368;left:-132.5px;width:300px;text-align:center;">16</div>
<div class="t" style="top:391.49px;font-size:7.8px;color:#5f6368;left:-132.5px;width:300px;text-align:center;">17</div>
<div class="t" style="top:407.69px;font-size:7.8px;color:#5f6368;left:-132.5px;width:300px;text-align:center;">18</div>
<div class="t" style="top:423.89px;font-size:7.8px;color:#5f6368;left:-132.5px;width:300px;text-align:center;">19</div>
<div class="t" style="top:440.09px;font-size:7.8px;color:#5f6368;left:-132.5px;width:300px;text-align:center;">20</div>
<div class="t" style="top:456.29px;font-size:7.8px;color:#5f6368;left:-132.5px;width:300px;text-align:center;">21</div>
<div class="t" style="top:131.62px;font-size:10.2px;color:#1f1f1f;font-weight:bold;left:-76.05px;width:300px;text-align:center;">Date</div>
<div class="t" style="top:131.62px;font-size:10.2px;color:#1f1f1f;font-weight:bold;left:1.85px;width:300px;text-align:center;">Salesperson</div>
<div class="t" style="top:131.62px;font-size:10.2px;color:#1f1f1f;font-weight:bold;left:79.75px;width:300px;text-align:center;">Region</div>
<div class="t" style="top:131.62px;font-size:10.2px;color:#1f1f1f;font-weight:bold;left:157.65px;width:300px;text-align:center;">Product</div>
<div class="t" style="top:131.62px;font-size:10.2px;color:#1f1f1f;font-weight:bold;left:235.55px;width:300px;text-align:center;">Units Sold</div>
<div class="t" style="top:131.62px;font-size:10.2px;color:#1f1f1f;font-weight:bold;left:313.45px;width:300px;text-align:center;">Unit Price</div>
<div class="t" style="top:131.62px;font-size:10.2px;color:#1f1f1f;font-weight:bold;left:391.35px;width:300px;text-align:center;">Total Sales</div>
<div class="t" style="top:131.62px;font-size:10.2px;color:#1f1f1f;font-weight:bold;left:469.25px;width:300px;text-align:center;">Target Met</div>
<div class="t" style="top:148.02px;font-size:10.2px;color:#222;left:-189.8px;width:300px;text-align:right;-webkit-text-stroke:0.2px #222">2025-06-01</div>
<div class="t" style="top:148.02px;font-size:10.2px;color:#222;left:115.9px;-webkit-text-stroke:0.2px #222">Alice</div>
<div class="t" style="top:148.02px;font-size:10.2px;color:#222;left:193.8px;-webkit-text-stroke:0.2px #222">North</div>
<div class="t" style="top:148.02px;font-size:10.2px;color:#222;left:271.7px;-webkit-text-stroke:0.2px #222">Laptop</div>
<div class="t" style="top:148.02px;font-size:10.2px;color:#222;left:121.8px;width:300px;text-align:right;-webkit-text-stroke:0.2px #222">5</div>
<div class="t" style="top:148.02px;font-size:10.2px;color:#222;left:199.7px;width:300px;text-align:right;-webkit-text-stroke:0.2px #222">50000</div>
<div class="t" style="top:148.02px;font-size:10.2px;color:#222;left:277.6px;width:300px;text-align:right;-webkit-text-stroke:0.2px #222">250000</div>
<div class="t" style="top:148.02px;font-size:10.2px;color:#222;left:583.3px;-webkit-text-stroke:0.2px #222">1</div>
<div class="t" style="top:164.22px;font-size:10.2px;color:#222;left:-189.8px;width:300px;text-align:right;-webkit-text-stroke:0.2px #222">2025-06-01</div>
<div class="t" style="top:164.22px;font-size:10.2px;color:#222;left:115.9px;-webkit-text-stroke:0.2px #222">Bob</div>
<div class="t" style="top:164.22px;font-size:10.2px;color:#222;left:193.8px;-webkit-text-stroke:0.2px #222">South</div>
<div class="t" style="top:164.22px;font-size:10.2px;color:#222;left:271.7px;-webkit-text-stroke:0.2px #222">Mobile</div>
<div class="t" style="top:164.22px;font-size:10.2px;color:#222;left:121.8px;width:300px;text-align:right;-webkit-text-stroke:0.2px #222">12</div>
<div class="t" style="top:164.22px;font-size:10.2px;color:#222;left:199.7px;width:300px;text-align:right;-webkit-text-stroke:0.2px #222">15000</div>
<div class="t" style="top:164.22px;font-size:10.2px;color:#222;left:277.6px;width:300px;text-align:right;-webkit-text-stroke:0.2px #222">180000</div>
<div class="t" style="top:164.22px;font-size:10.2px;color:#222;left:583.3px;-webkit-text-stroke:0.2px #222">0</div>
<div class="t" style="top:180.42px;font-size:10.2px;color:#222;left:-189.8px;width:300px;text-align:right;-webkit-text-stroke:0.2px #222">2025-06-02</div>
<div class="t" style="top:180.42px;font-size:10.2px;color:#222;left:115.9px;-webkit-text-stroke:0.2px #222">Charlie</div>
<div class="t" style="top:180.42px;font-size:10.2px;color:#222;left:193.8px;-webkit-text-stroke:0.2px #222">East</div>
<div class="t" style="top:180.42px;font-size:10.2px;color:#222;left:271.7px;-webkit-text-stroke:0.2px #222">Laptop</div>
<div class="t" style="top:180.42px;font-size:10.2px;color:#222;left:121.8px;width:300px;text-align:right;-webkit-text-stroke:0.2px #222">3</div>
<div class="t" style="top:180.42px;font-size:10.2px;color:#222;left:199.7px;width:300px;text-align:right;-webkit-text-stroke:0.2px #222">50000</div>
<div class="t" style="top:180.42px;font-size:10.2px;color:#222;left:277.6px;width:300px;text-align:right;-webkit-text-stroke:0.2px #222">150000</div>
<div class="t" style="top:180.42px;font-size:10.2px;color:#222;left:583.3px;-webkit-text-stroke:0.2px #222">0</div>
<div class="t" style="top:196.62px;font-size:10.2px;color:#222;left:-189.8px;width:300px;text-align:right;-webkit-text-stroke:0.2px #222">2025-06-03</div>
<div class="t" style="top:196.62px;font-size:10.2px;color:#222;left:115.9px;-webkit-text-stroke:0.2px #222">Alice</div>
<div class="t" style="top:196.62px;font-size:10.2px;color:#222;left:193.8px;-webkit-text-stroke:0.2px #222">North</div>
<div class="t" style="top:196.62px;font-size:10.2px;color:#222;left:271.7px;-webkit-text-stroke:0.2px #222">Tablet</div>
<div class="t" style="top:196.62px;font-size:10.2px;color:#222;left:121.8px;width:300px;text-align:right;-webkit-text-stroke:0.2px #222">10</div>
<div class="t" style="top:196.62px;font-size:10.2px;color:#222;left:199.7px;width:300px;text-align:right;-webkit-text-stroke:0.2px #222">25000</div>
<div class="t" style="top:196.62px;font-size:10.2px;color:#222;left:277.6px;width:300px;text-align:right;-webkit-text-stroke:0.2px #222">250000</div>
<div class="t" style="top:196.62px;font-size:10.2px;color:#222;left:583.3px;-webkit-text-stroke:0.2px #222">1</div>
<div class="t" style="top:212.82px;font-size:10.2px;color:#222;left:-189.8px;width:300px;text-align:right;-webkit-text-stroke:0.2px #222">2025-06-04</div>
<div class="t" style="top:212.82px;font-size:10.2px;color:#222;left:115.9px;-webkit-text-stroke:0.2px #222">Bob</div>
<div class="t" style="top:212.82px;font-size:10.2px;color:#222;left:193.8px;-webkit-text-stroke:0.2px #222">South</div>
<div class="t" style="top:212.82px;font-size:10.2px;color:#222;left:271.7px;-webkit-text-stroke:0.2px #222">Laptop</div>
<div class="t" style="top:212.82px;font-size:10.2px;color:#222;left:121.8px;width:300px;text-align:right;-webkit-text-stroke:0.2px #222">6</div>
<div class="t" style="top:212.82px;font-size:10.2px;color:#222;left:199.7px;width:300px;text-align:right;-webkit-text-stroke:0.2px #222">50000</div>
<div class="t" style="top:212.82px;font-size:10.2px;color:#222;left:277.6px;width:300px;text-align:right;-webkit-text-stroke:0.2px #222">300000</div>
<div class="t" style="top:212.82px;font-size:10.2px;color:#222;left:583.3px;-webkit-text-stroke:0.2px #222">1</div>
<div class="t" style="top:229.02px;font-size:10.2px;color:#222;left:-189.8px;width:300px;text-align:right;-webkit-text-stroke:0.2px #222">2025-06-05</div>
<div class="t" style="top:229.02px;font-size:10.2px;color:#222;left:115.9px;-webkit-text-stroke:0.2px #222">Charlie</div>
<div class="t" style="top:229.02px;font-size:10.2px;color:#222;left:193.8px;-webkit-text-stroke:0.2px #222">East</div>
<div class="t" style="top:229.02px;font-size:10.2px;color:#222;left:271.7px;-webkit-text-stroke:0.2px #222">Mobile</div>
<div class="t" style="top:229.02px;font-size:10.2px;color:#222;left:121.8px;width:300px;text-align:right;-webkit-text-stroke:0.2px #222">15</div>
<div class="t" style="top:229.02px;font-size:10.2px;color:#222;left:199.7px;width:300px;text-align:right;-webkit-text-stroke:0.2px #222">15000</div>
<div class="t" style="top:229.02px;font-size:10.2px;color:#222;left:277.6px;width:300px;text-align:right;-webkit-text-stroke:0.2px #222">225000</div>
<div class="t" style="top:229.02px;font-size:10.2px;color:#222;left:583.3px;-webkit-text-stroke:0.2px #222">1</div>
<div class="t" style="top:245.22px;font-size:10.2px;color:#222;left:-189.8px;width:300px;text-align:right;-webkit-text-stroke:0.2px #222">2025-06-05</div>
<div class="t" style="top:245.22px;font-size:10.2px;color:#222;left:115.9px;-webkit-text-stroke:0.2px #222">Alice</div>
<div class="t" style="top:245.22px;font-size:10.2px;color:#222;left:193.8px;-webkit-text-stroke:0.2px #222">North</div>
<div class="t" style="top:245.22px;font-size:10.2px;color:#222;left:271.7px;-webkit-text-stroke:0.2px #222">Laptop</div>
<div class="t" style="top:245.22px;font-size:10.2px;color:#222;left:121.8px;width:300px;text-align:right;-webkit-text-stroke:0.2px #222">4</div>
<div class="t" style="top:245.22px;font-size:10.2px;color:#222;left:199.7px;width:300px;text-align:right;-webkit-text-stroke:0.2px #222">50000</div>
<div class="t" style="top:245.22px;font-size:10.2px;color:#222;left:277.6px;width:300px;text-align:right;-webkit-text-stroke:0.2px #222">200000</div>
<div class="t" style="top:245.22px;font-size:10.2px;color:#222;left:583.3px;-webkit-text-stroke:0.2px #222">0</div>
<div class="a" style="left:111.9px;top:306.8px;width:2px;height:15px;background:#fcfcfc;"></div>
<div class="t" style="top:310.02px;font-size:10.2px;color:#222;left:38px;-webkit-text-stroke:0.2px #222">Total sales by Alice</div>
<div class="a" style="left:111.9px;top:355.4px;width:2px;height:15px;background:#fcfcfc;"></div>
<div class="a" style="left:189.8px;top:355.4px;width:2px;height:15px;background:#fcfcfc;"></div>
<div class="t" style="top:358.62px;font-size:10.2px;color:#222;left:38px;-webkit-text-stroke:0.2px #222">Number of times target was met</div>
<div class="a" style="left:190.6px;top:305.8px;width:78.6px;height:17px;background:transparent;border:2px solid #6d8398;border-bottom-color:#5e8088"></div>
<div class="a" style="left:265.6px;top:319.2px;width:6px;height:6px;background:#1643aa;border-radius:50%"></div>
<div class="a" style="left:0px;top:469px;width:1110px;height:35px;background:#f6f7f9;"></div>
<div class="t" style="top:485.14px;font-size:12px;color:#444746;left:-103px;width:300px;text-align:center;">+</div>
<svg style="left:72px;top:487px" width="12" height="9" viewBox="0 0 12 9"><path fill="#444746" d="M0 0h12v1.6H0zM0 3.7h12v1.6H0zM0 7.4h12v1.6H0z"/></svg>
<div class="a" style="left:104px;top:480px;width:62px;height:22px;background:#e6ebf3;border-radius:4px 4px 0 0"></div>
<div class="t" style="top:486.02px;font-size:10.2px;color:#3a5584;font-weight:bold;left:113px;">Sheet1</div>
<svg style="left:156.5px;top:489px" width="7" height="4" viewBox="0 0 10 5"><path fill="#0b57d0" d="M0 0h10L5 5z"/></svg>
<svg style="left:1103.5px;top:445px" width="5" height="3.5" viewBox="0 0 10 7"><path fill="#5f6368" d="M0 7L5 0l5 7z"/></svg>
<svg style="left:1103.5px;top:458px" width="5" height="3.5" viewBox="0 0 10 7"><path fill="#5f6368" d="M0 0h10L5 7z"/></svg>
<svg style="left:1085px;top:488px" width="5" height="8" viewBox="0 0 6 10"><path fill="none" stroke="#333" stroke-width="1.6" d="M5 1L1 5l4 4"/></svg>
<div class="a" style="left:1082px;top:470px;width:2px;height:2px;background:#555;border-radius:1px"></div>
<div class="a" style="left:1094px;top:470px;width:2px;height:2px;background:#555;border-radius:1px"></div>
<div class="a" style="left:0px;top:418px;width:1112px;height:86px;background:linear-gradient(180deg,rgba(20,20,22,0.060) 0.0px,rgba(20,20,22,0.080) 1.0px,rgba(20,20,22,0.180) 11.0px,rgba(20,20,22,0.265) 21.0px,rgba(20,20,22,0.340) 31.0px,rgba(20,20,22,0.445) 46.0px,rgba(20,20,22,0.540) 48.0px,rgba(20,20,22,0.545) 56.0px,rgba(20,20,22,0.600) 66.0px,rgba(20,20,22,0.670) 76.0px,rgba(20,20,22,0.735) 86.0px);"></div>
<div class="a" style="left:17.5px;top:428px;width:14px;height:14px;background:#6658d6;border-radius:50%;opacity:0.95"></div>
<div class="a" style="left:186px;top:467px;width:397px;height:6px;background:rgba(60,60,60,0.18);border-radius:3px"></div>
<svg style="left:30px;top:461px" width="18" height="20" viewBox="0 0 18 20"><path fill="#ffffff" d="M1.5 1.2Q1.5 0 2.6 0.6L17 9.2q1 0.8 0 1.6L2.6 19.4Q1.5 20 1.5 18.8z"/></svg>
<div class="t" style="top:461.22px;font-size:18px;color:#ffffff;left:67.4px;-webkit-text-stroke:0.4px #fff;letter-spacing:0.2px">00:00 / 01:29</div>
<svg style="left:921px;top:462px" width="19" height="17" viewBox="0 0 24 22"><path fill="none" stroke="#ffffff" stroke-width="2" stroke-linejoin="round" d="M2 8h4l6-5v16l-6-5H2z"/><path fill="none" stroke="#ffffff" stroke-width="2" stroke-linecap="round" d="M15.5 8a4 4 0 0 1 0 6M18.5 5a8 8 0 0 1 0 12"/></svg>
<div class="a" style="left:961px;top:466.5px;width:66px;height:7px;background:#0a66ff;border-radius:3.5px"></div>
<div class="a" style="left:1018.5px;top:462px;width:16.5px;height:16.5px;background:#0a66ff;border-radius:50%"></div>
<svg style="left:1065px;top:462px" width="17" height="17" viewBox="0 0 17 17"><path fill="none" stroke="#ffffff" stroke-width="2" stroke-linecap="round" d="M1 5V2.5Q1 1 2.5 1H5M12 1h2.5Q16 1 16 2.5V5M16 12v2.5q0 1.5-1.5 1.5H12M5 16H2.5Q1 16 1 14.5V12"/></svg>
</div>
<div class="a" style="left:404px;top:376px;width:1112px;height:504px;background:transparent;border-radius:10px;border:1px solid rgba(0,0,0,0.09);pointer-events:none"></div>
<div class="a" style="left:837px;top:919px;width:246px;height:47px;background:linear-gradient(180deg,#6660c3,#5b54b8);border-radius:8px;box-shadow:inset 0 0 0 1px rgba(120,110,220,0.5)"></div>
<svg style="left:850px;top:928px" width="30" height="28" viewBox="850 928 30 28"><line x1="858.6" y1="949" x2="874" y2="936.5" stroke="#ffffff" stroke-width="5.8" stroke-linecap="round"/><line x1="869.6" y1="939.9" x2="871.6" y2="938.3" stroke="#5f58bd" stroke-width="1.8" stroke-linecap="round"/><g fill="#ffffff"><path d="M859.2 932.8l0.9 2.4 2.4 0.9-2.4 0.9-0.9 2.4-0.9-2.4-2.4-0.9 2.4-0.9z"/><path d="M873 943.6l0.9 2.3 2.3 0.9-2.3 0.9-0.9 2.3-0.9-2.3-2.3-0.9 2.3-0.9z"/><circle cx="864.5" cy="934.3" r="1.1"/></g></svg>
<div class="t" style="top:932.98px;font-size:19.5px;color:#ffffff;left:884.5px;-webkit-text-stroke:0.3px #fff">Generate AI Content</div>
<div class="a" style="left:843px;top:972px;width:234px;height:32px;background:#1b1b26;border-radius:6px"></div>
<div class="t" style="top:980.63px;font-size:14.7px;color:#f2f2f5;left:810px;width:300px;text-align:center;-webkit-text-stroke:0.2px #f2f2f5">Generate an AI video and guide</div>
<svg style="left:934px;top:938px" width="18" height="22" viewBox="0 0 18 22"><path fill="#ffffff" stroke="#222" stroke-width="1" d="M5 2.5a1.5 1.5 0 0 1 3 0V9l1-0.2a1.4 1.4 0 0 1 2.6 0.4 1.4 1.4 0 0 1 2.4 0.6 1.4 1.4 0 0 1 2.5 0.8V15q0 5-5 5H9q-3 0-4.5-2.5L1.5 12.5a1.3 1.3 0 0 1 2-1.6L5 12.5z"/></svg>
</body></html>
